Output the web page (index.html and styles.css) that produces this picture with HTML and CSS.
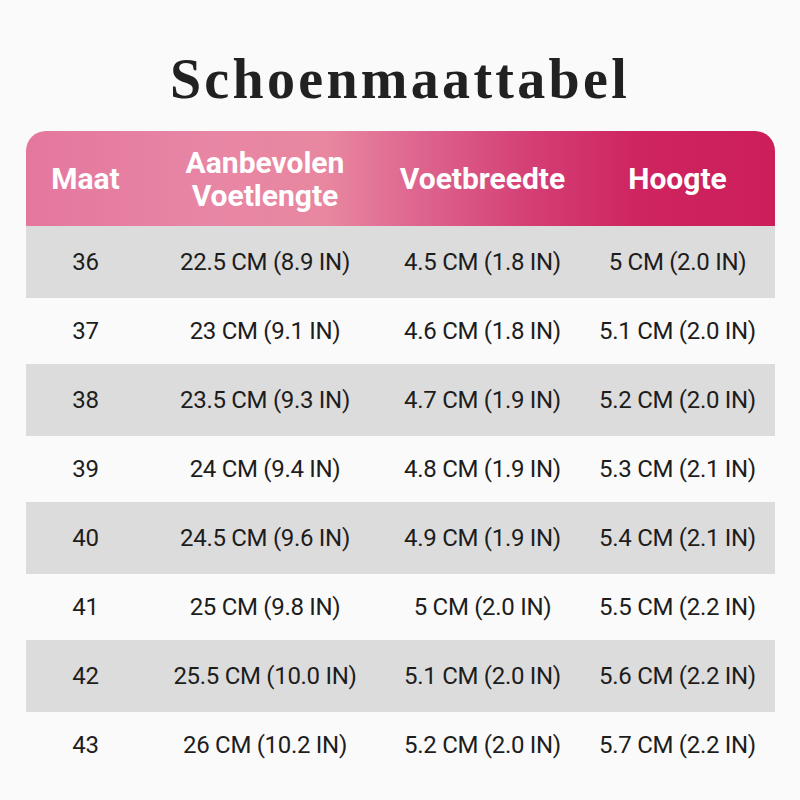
FILE: index.html
```html
<!DOCTYPE html>
<html lang="nl">
<head>
<meta charset="utf-8">
<title>Schoenmaattabel</title>
<link rel="stylesheet" href="styles.css">
</head>
<body>
<main class="page">
  <h1 class="title">Schoenmaattabel</h1>
  <div class="table">
    <div class="head">
      <div class="hcell">Maat</div>
      <div class="hcell">Aanbevolen<br>Voetlengte</div>
      <div class="hcell">Voetbreedte</div>
      <div class="hcell">Hoogte</div>
    </div>
    <div class="row grey"><div>36</div><div>22.5 CM (8.9 IN)</div><div>4.5 CM (1.8 IN)</div><div>5 CM (2.0 IN)</div></div>
    <div class="row"><div>37</div><div>23 CM (9.1 IN)</div><div>4.6 CM (1.8 IN)</div><div>5.1 CM (2.0 IN)</div></div>
    <div class="row grey"><div>38</div><div>23.5 CM (9.3 IN)</div><div>4.7 CM (1.9 IN)</div><div>5.2 CM (2.0 IN)</div></div>
    <div class="row"><div>39</div><div>24 CM (9.4 IN)</div><div>4.8 CM (1.9 IN)</div><div>5.3 CM (2.1 IN)</div></div>
    <div class="row grey"><div>40</div><div>24.5 CM (9.6 IN)</div><div>4.9 CM (1.9 IN)</div><div>5.4 CM (2.1 IN)</div></div>
    <div class="row"><div>41</div><div>25 CM (9.8 IN)</div><div>5 CM (2.0 IN)</div><div>5.5 CM (2.2 IN)</div></div>
    <div class="row grey"><div>42</div><div>25.5 CM (10.0 IN)</div><div>5.1 CM (2.0 IN)</div><div>5.6 CM (2.2 IN)</div></div>
    <div class="row"><div>43</div><div>26 CM (10.2 IN)</div><div>5.2 CM (2.0 IN)</div><div>5.7 CM (2.2 IN)</div></div>
  </div>
</main>
</body>
</html>
```
FILE: styles.css
```css
html, body {
  margin: 0;
  padding: 0;
  background: #fafafa;
}
.page {
  width: 800px;
  height: 800px;
  padding-top: 47px;
  box-sizing: border-box;
}
.title {
  margin: 0 0 20px 0;
  height: 64px;
  line-height: 64px;
  text-align: center;
  font-family: "Liberation Serif", serif;
  font-weight: 700;
  font-size: 56px;
  letter-spacing: 3.3px;
  color: #212121;
}
.table {
  margin-left: 26px;
  width: 749px;
}
.head,
.row {
  display: grid;
  grid-template-columns: 119px 240px 195px 195px;
  align-items: center;
  text-align: center;
}
.head {
  height: 95px;
  border-radius: 20px 20px 0 0;
  background: linear-gradient(90deg, #e4779e 0%, #e886a5 25%, #e8879f 40%, #de6690 52%, #d43d73 68%, #ce2460 82%, #cc1e5a 100%);
  font-family: Roboto, "Liberation Sans", sans-serif;
  font-weight: 700;
  font-size: 30px;
  line-height: 33px;
  color: #ffffff;
}
.row {
  height: 66px;
  font-family: Roboto, "Liberation Sans", sans-serif;
  font-size: 24px;
  letter-spacing: -0.3px;
  color: #1d1d1d;
}
.row.grey {
  height: 72px;
  background: #dcdcdc;
}
```
